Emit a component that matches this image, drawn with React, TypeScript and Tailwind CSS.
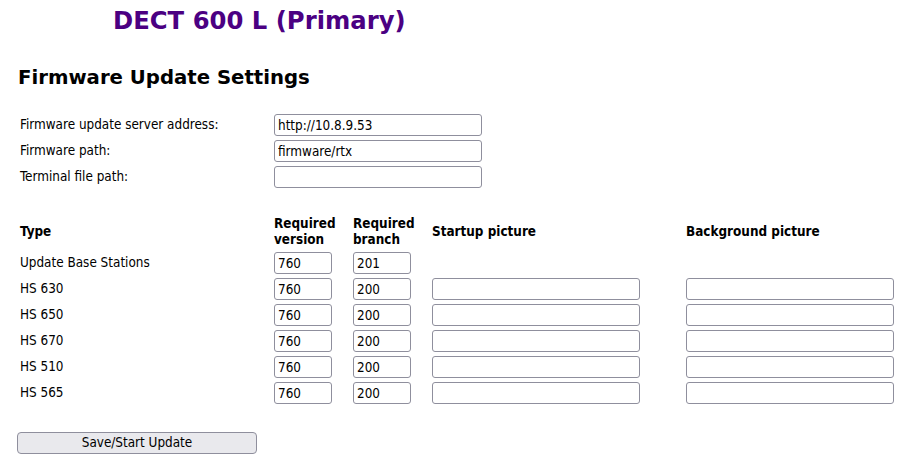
import * as React from "react";

type Row = {
  type: string;
  version: string;
  branch: string;
  pictures: boolean;
};

const rows: Row[] = [
  { type: "Update Base Stations", version: "760", branch: "201", pictures: false },
  { type: "HS 630", version: "760", branch: "200", pictures: true },
  { type: "HS 650", version: "760", branch: "200", pictures: true },
  { type: "HS 670", version: "760", branch: "200", pictures: true },
  { type: "HS 510", version: "760", branch: "200", pictures: true },
  { type: "HS 565", version: "760", branch: "200", pictures: true },
];

const serverFields = [
  { label: "Firmware update server address:", value: "http://10.8.9.53" },
  { label: "Firmware path:", value: "firmware/rtx" },
  { label: "Terminal file path:", value: "" },
];

function TextField({ value, className }: { value: string; className?: string }) {
  return (
    <input
      type="text"
      defaultValue={value}
      className={`h-[22px] rounded-[3px] border border-[#8f8f9d] bg-white px-[3px] text-[13.4px] text-black outline-none ${className ?? ""}`}
    />
  );
}

export default function App() {
  return (
    <div
      className="min-h-[463px] bg-white text-[13.4px] text-black"
      style={{ fontFamily: '"DejaVu Sans Condensed", "DejaVu Sans", sans-serif' }}
    >
      <h1
        className="pl-[113px] pt-[6px] text-[24.3px] font-bold leading-[30px] text-[#4b0082]"
        style={{ fontFamily: '"DejaVu Sans", sans-serif' }}
      >
        DECT 600 L (Primary)
      </h1>

      <h2
        className="mt-[30px] pl-[18px] text-[19.7px] font-bold leading-[24px]"
        style={{ fontFamily: '"DejaVu Sans", sans-serif' }}
      >
        Firmware Update Settings
      </h2>

      <div className="mt-[24px] flex flex-col gap-[4px] pl-[20px]">
        {serverFields.map((field) => (
          <div key={field.label} className="flex items-center">
            <span className="w-[254px]">{field.label}</span>
            <TextField value={field.value} className="w-[208px]" />
          </div>
        ))}
      </div>

      <div className="mt-[28px] grid grid-cols-[254px_79px_79px_254px_208px] items-center gap-y-[4px] pl-[20px]">
        <span className="font-bold">Type</span>
        <span className="font-bold leading-[16px]">
          Required
          <br />
          version
        </span>
        <span className="font-bold leading-[16px]">
          Required
          <br />
          branch
        </span>
        <span className="font-bold">Startup picture</span>
        <span className="font-bold">Background picture</span>

        {rows.map((row) => (
          <React.Fragment key={row.type}>
            <span>{row.type}</span>
            <TextField value={row.version} className="w-[58px]" />
            <TextField value={row.branch} className="w-[58px]" />
            {row.pictures ? <TextField value="" className="w-[208px]" /> : <span />}
            {row.pictures ? <TextField value="" className="w-[208px]" /> : <span />}
          </React.Fragment>
        ))}
      </div>

      <div className="mt-[28px] pl-[17px]">
        <button
          type="button"
          className="h-[22px] w-[240px] rounded-[4px] border border-[#8f8f9d] bg-[#e9e9ed] text-[13.4px] text-black"
        >
          Save/Start Update
        </button>
      </div>
    </div>
  );
}
